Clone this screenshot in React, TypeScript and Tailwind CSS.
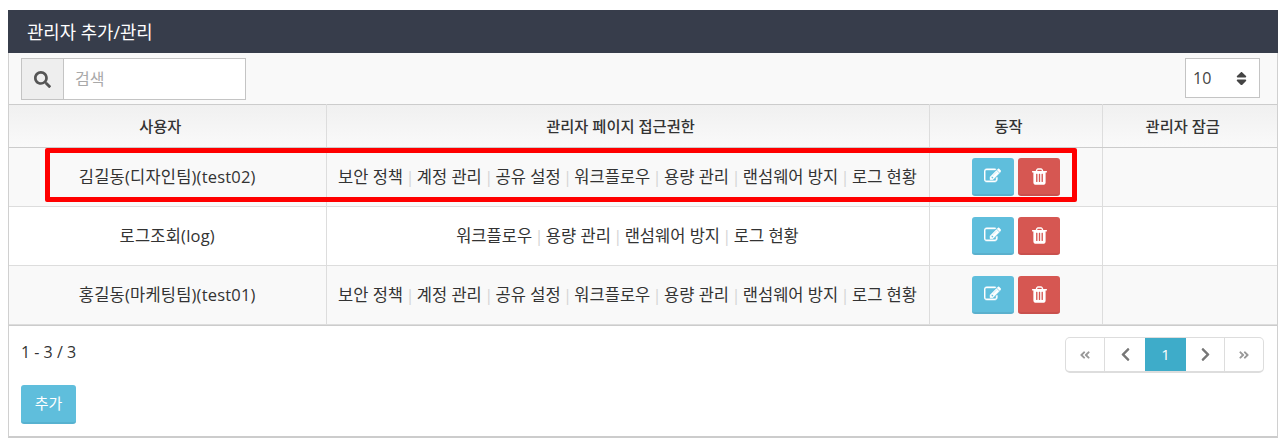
import { FaAngleDoubleLeft, FaAngleDoubleRight, FaChevronLeft, FaChevronRight, FaSearch, FaSort } from "react-icons/fa";

const allPerms = ["보안 정책", "계정 관리", "공유 설정", "워크플로우", "용량 관리", "랜섬웨어 방지", "로그 현황"];
const logPerms = ["워크플로우", "용량 관리", "랜섬웨어 방지", "로그 현황"];

const rows = [
  { user: "김길동(디자인팀)(test02)", perms: allPerms, bg: "bg-[#f9f9f9]", h: "h-[59px]" },
  { user: "로그조회(log)", perms: logPerms, bg: "bg-white", h: "h-[59px]" },
  { user: "홍길동(마케팅팀)(test01)", perms: allPerms, bg: "bg-[#f9f9f9]", h: "h-[59px]" },
];

function EditIcon() {
  return (
    <svg viewBox="0 0 1792 1792" className="h-[18px] w-[17px]" fill="currentColor" stroke="currentColor" strokeWidth={50}>
      <path d="M888 1184l116-116-152-152-116 116v56h96v96h56zm440-720q-16-16-33 1l-350 350q-17 17-1 33t33-1l350-350q17-17 1-33zm80 594v190q0 119-84.5 203.5t-203.5 84.5h-832q-119 0-203.5-84.5t-84.5-203.5v-832q0-119 84.5-203.5t203.5-84.5h832q63 0 117 25 15 7 18 23 3 17-9 29l-49 49q-14 14-32 8-23-6-45-6h-832q-66 0-113 47t-47 113v832q0 66 47 113t113 47h832q66 0 113-47t47-113v-126q0-13 9-22l64-64q15-15 35-7t20 29zm-96-738l288 288-672 672h-288v-288zm444 132l-92 92-288-288 92-92q28-28 68-28t68 28l152 152q28 28 28 68t-28 68z" />
    </svg>
  );
}

function TrashIcon() {
  return (
    <svg viewBox="0 0 1792 1792" className="ml-px h-[19px] w-[19px]" fill="currentColor">
      <path d="M704 1376v-704q0-14-9-23t-23-9h-64q-14 0-23 9t-9 23v704q0 14 9 23t23 9h64q14 0 23-9t9-23zm256 0v-704q0-14-9-23t-23-9h-64q-14 0-23 9t-9 23v704q0 14 9 23t23 9h64q14 0 23-9t9-23zm256 0v-704q0-14-9-23t-23-9h-64q-14 0-23 9t-9 23v704q0 14 9 23t23 9h64q14 0 23-9t9-23zm-544-992h448l-48-117q-7-9-17-11h-317q-10 2-17 11zm928 32v64q0 14-9 23t-23 9h-96v948q0 83-47 143.5t-113 60.5h-832q-66 0-113-58.5t-47-141.5v-952h-96q-14 0-23-9t-9-23v-64q0-14 9-23t23-9h309l70-167q15-37 54-63t79-26h320q40 0 79 26t54 63l70 167h309q14 0 23 9t9 23z" />
    </svg>
  );
}

function Perms({ items }: { items: string[] }) {
  return (
    <>
      {items.map((p, i) => (
        <span key={p}>
          {i > 0 && <span className="mx-[2.35px] text-[#d5d5d5]">|</span>}
          {p}
        </span>
      ))}
    </>
  );
}

export default function App() {
  return (
    <div className="relative h-[445px] bg-white pl-2 pr-2 pt-2.5 font-['Open_Sans','Noto_Sans_CJK_KR',sans-serif] text-[16px] text-[#333]">
      {/* panel */}
      <div className="h-[428px] w-[1270px] border-x border-b-2 border-x-[#d0d0d0] border-b-[#cccccc]">
        <div className="-mx-px h-[43px] bg-[#373d4b] pl-[19px] text-[17.8px] leading-[44px] text-white">관리자 추가/관리</div>

        {/* toolbar */}
        <div className="flex h-[51px] items-start justify-between bg-[#f9f9f9] pl-3 pr-[17px] pt-[5px]">
          <div className="flex h-[42px] w-[225px] border border-[#c4c4c4] bg-white">
            <div className="flex w-[42px] items-center justify-center border-r border-[#c4c4c4] bg-[#eeeeee] text-[#555]">
              <FaSearch className="text-[17px]" />
            </div>
            <div className="pl-[11px] leading-[40px] text-[#a9a9a9]">검색</div>
          </div>
          <div className="flex h-[40px] w-[75px] items-center justify-between border border-[#c4c4c4] bg-white pl-[7px] pr-[9px] text-[16px] text-[#444]">
            10
            <FaSort className="text-[17px] text-[#444]" />
          </div>
        </div>

        {/* table */}
        <table className="w-full table-fixed border-collapse text-center">
          <colgroup>
            <col className="w-[317px]" />
            <col className="w-[603px]" />
            <col className="w-[173px]" />
            <col />
          </colgroup>
          <thead>
            <tr className="h-[43px] bg-gradient-to-b from-[#f0f0f0] to-[#fafafa] text-[15.3px]">
              <th className="border-y border-r border-y-[#cccccc] border-r-[#dddddd] pr-[14px] font-medium">사용자</th>
              <th className="border-y border-r border-y-[#cccccc] border-r-[#dddddd] pr-[14px] font-medium">관리자 페이지 접근권한</th>
              <th className="border-y border-r border-y-[#cccccc] border-r-[#dddddd] pr-[14px] font-medium">동작</th>
              <th className="border-y border-y-[#cccccc] pr-[14px] font-medium">관리자 잠금</th>
            </tr>
          </thead>
          <tbody>
            {rows.map((r) => (
              <tr key={r.user} className={`${r.h} ${r.bg} text-[16.5px]`}>
                <td className="border-b border-r border-[#dddddd] tracking-[0.2px]">{r.user}</td>
                <td className="border-b border-r border-[#dddddd] whitespace-nowrap">
                  <Perms items={r.perms} />
                </td>
                <td className="border-b border-r border-[#dddddd]">
                  <div className="flex justify-center gap-1">
                    <button className="flex h-[38px] w-[42px] items-center justify-center rounded-[3px] border-b-2 border-[#5ab0cd] bg-[#5fbedc] text-white">
                      <EditIcon />
                    </button>
                    <button className="flex h-[38px] w-[42px] items-center justify-center rounded-[3px] border-b-2 border-[#c9504d] bg-[#d65752] text-white">
                      <TrashIcon />
                    </button>
                  </div>
                </td>
                <td className="border-b border-[#dddddd]"></td>
              </tr>
            ))}
          </tbody>
        </table>

        {/* footer */}
        <div className="flex items-start justify-between border-t border-[#cccccc] pl-3 pr-[13px] pt-[11px]">
          <div>
            <div className="h-[48px] pt-[5px] leading-5">1 - 3 / 3</div>
            <button className="h-[39px] w-[55px] rounded-[3px] border-b-2 border-[#57b2d0] bg-[#5fbedc] text-[15px] text-white">추가</button>
          </div>
          <div className="flex h-[36px] overflow-hidden rounded-[5px] border border-b-2 border-[#dddddd] bg-white text-[#777]">
            <div className="flex w-[39px] items-center justify-center border-r border-[#dddddd] text-[#999]">
              <FaAngleDoubleLeft className="text-[12px]" />
            </div>
            <div className="flex w-[40px] items-center justify-center">
              <FaChevronLeft className="text-[15px]" />
            </div>
            <div className="-my-px flex w-[41px] items-center justify-center bg-[#3eacc9] text-[15px] text-white">1</div>
            <div className="flex w-[39px] items-center justify-center border-r border-[#dddddd]">
              <FaChevronRight className="text-[15px]" />
            </div>
            <div className="flex w-[38px] items-center justify-center text-[#999]">
              <FaAngleDoubleRight className="text-[12px]" />
            </div>
          </div>
        </div>
      </div>

      {/* red highlight annotation */}
      <div className="absolute left-[45px] top-[148px] h-[54px] w-[1032px] rounded-[2px] border-[5px] border-[#ff0000]"></div>
    </div>
  );
}
